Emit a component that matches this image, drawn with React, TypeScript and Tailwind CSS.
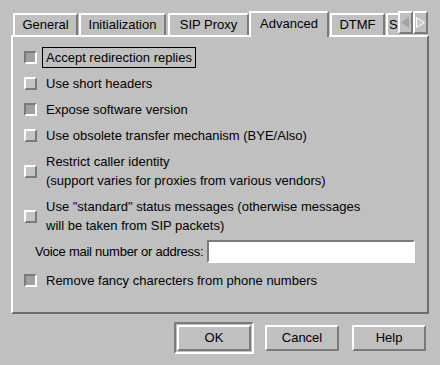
const raised = "border-2 border-t-white border-l-white border-r-[#7a7a7a] border-b-[#7a7a7a]"
const sunken = "border-2 border-t-[#7a7a7a] border-l-[#7a7a7a] border-r-white border-b-white"

function Tab({ label, width, ml = 0, selected = false }: { label: string; width: number; ml?: number; selected?: boolean }) {
  if (selected) {
    return (
      <div
        className="h-[26px] bg-[#c0c0c0] border-t-2 border-l-2 border-r-2 border-t-white border-l-white border-r-[#7a7a7a] leading-[19px] pt-[1px] text-center overflow-hidden whitespace-nowrap"
        style={{ width, marginLeft: ml }}
      >
        {label}
      </div>
    )
  }
  return (
    <div
      className="h-[22px] mb-[2px] border-t-2 border-l-2 border-r-2 border-t-white border-l-white border-r-[#7a7a7a] leading-[19px] text-center overflow-hidden whitespace-nowrap"
      style={{ width, marginLeft: ml }}
    >
      {label}
    </div>
  )
}

function Check({ checked }: { checked: boolean }) {
  return (
    <div
      className={
        "w-[13px] h-[13px] shrink-0 " + (checked ? "bg-[#a0a0a0] " + sunken : "bg-[#c4c4c4] " + raised)
      }
    />
  )
}

function Row({ checked, lines, focus = false }: { checked: boolean; lines: string[]; focus?: boolean }) {
  return (
    <div className="flex items-center gap-[6px]">
      <Check checked={checked} />
      <div className={"px-[3px] leading-[19px] " + (focus ? "outline outline-1 outline-black" : "")}>
        {lines.map((l) => (
          <div key={l} className="whitespace-nowrap">
            {l}
          </div>
        ))}
      </div>
    </div>
  )
}

function Btn({ label }: { label: string }) {
  return (
    <div className={"w-[74px] h-[26px] flex items-center justify-center bg-[#c0c0c0] " + raised}>{label}</div>
  )
}

export default function App() {
  return (
    <div
      className="w-[440px] h-[365px] bg-[#c0c0c0] text-black text-[13px] pt-[11px] px-[11px] overflow-hidden"
      style={{ fontFamily: '"Liberation Sans", Arial, sans-serif' }}
    >
      {/* Tab bar */}
      <div className="relative z-10 flex items-end pl-[2px] -mb-[2px] h-[26px]">
        <Tab label="General" width={65} />
        <Tab label="Initialization" width={87} ml={1} />
        <Tab label="SIP Proxy" width={81} ml={2} />
        <Tab label="Advanced" width={80} selected />
        <Tab label="DTMF" width={55} ml={1} />
        <div className="h-[22px] mb-[2px] ml-[1px] w-[12px] border-t-2 border-l-2 border-t-white border-l-white leading-[19px] pl-[1px] overflow-hidden">
          S
        </div>
        <div className="flex self-start h-[23px]">
          <div className={"w-[15px] h-[23px] flex items-center justify-center " + raised}>
            <svg width="9" height="11" viewBox="0 0 9 11">
              <polygon points="8,0 8,11 0,5.5" fill="#a4a4a4" />
            </svg>
          </div>
          <div className={"w-[15px] h-[23px] flex items-center justify-center " + raised}>
            <svg width="9" height="11" viewBox="0 0 9 11">
              <polygon points="0.5,0.5 0.5,10.5 8.5,5.5" fill="#c8c8c8" stroke="#ffffff" strokeWidth="1" />
            </svg>
          </div>
        </div>
      </div>

      {/* Panel */}
      <div className="w-[418px] h-[279px] border-2 border-t-white border-l-white border-r-[#6e6e6e] border-b-[#6e6e6e] pl-[11px] pt-[11px] flex flex-col">
        <div className="flex flex-col gap-[7px]">
          <Row checked lines={["Accept redirection replies"]} focus />
          <Row checked={false} lines={["Use short headers"]} />
          <Row checked lines={["Expose software version"]} />
          <Row checked={false} lines={["Use obsolete transfer mechanism (BYE/Also)"]} />
          <Row checked={false} lines={["Restrict caller identity", "(support varies for proxies from various vendors)"]} />
          <Row
            checked={false}
            lines={['Use "standard" status messages (otherwise messages', "will be taken from SIP packets)"]}
          />
        </div>
        <div className="flex items-center mt-[5px] pl-[11px] gap-[4px]">
          <span className="whitespace-nowrap tracking-[-0.25px]">Voice mail number or address:</span>
          <div className={"w-[208px] h-[23px] bg-white " + sunken} />
        </div>
        <div className="mt-[8px]">
          <Row checked lines={["Remove fancy charecters from phone numbers"]} />
        </div>
      </div>

      {/* Buttons */}
      <div className="flex justify-end items-center mt-[8px] pr-[3px]">
        <div className={"p-[1px] " + sunken}>
          <Btn label="OK" />
        </div>
        <div className="ml-[11px]">
          <Btn label="Cancel" />
        </div>
        <div className="ml-[13px]">
          <Btn label="Help" />
        </div>
      </div>
    </div>
  )
}
